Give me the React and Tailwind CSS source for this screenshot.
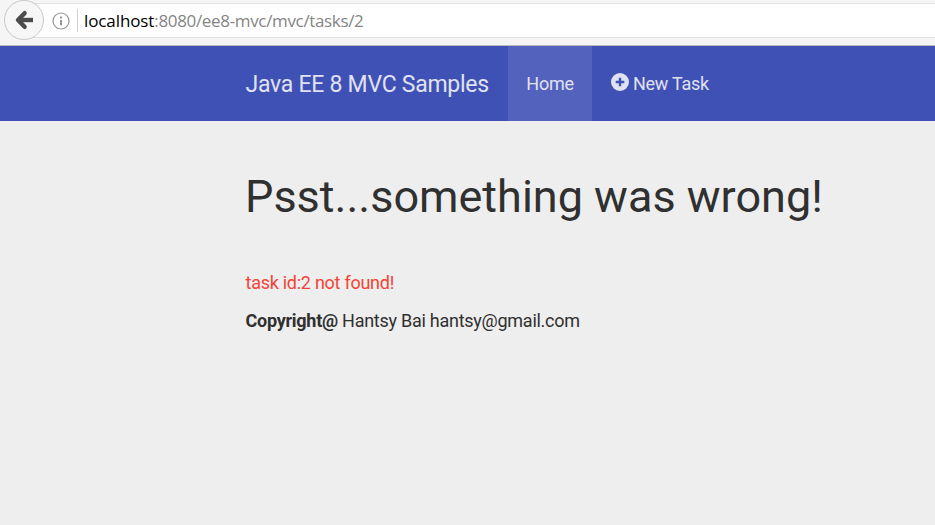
function BackButton() {
  return (
    <button aria-label="Back" className="relative z-10 ml-1 flex size-10 shrink-0 items-center justify-center rounded-full border border-[#c8c8c8] bg-[#f6f6f6]">
      <svg width="20" height="20" viewBox="0 0 20 20" fill="none" stroke="#4c4c4c" strokeWidth="4.4" strokeLinejoin="round">
        <path d="M10.6 3.2 4 10 10.6 16.8" strokeLinecap="round" />
        <path d="M4.5 10H19" />
      </svg>
    </button>
  );
}

function AddressBar() {
  return (
    <header className="flex h-[46px] items-start border-b border-[#b9b9b9] bg-[#f5f5f5]">
      <BackButton />
      <div className="-ml-5 mt-[3px] flex h-[35px] flex-1 items-center border-y border-[#e1e1e1] bg-white pl-7">
        <svg width="18" height="18" viewBox="0 0 18 18" fill="none" stroke="#969696" className="shrink-0">
          <circle cx="9" cy="9" r="8" strokeWidth="1.2" />
          <path d="M9 8v5.2" strokeWidth="2" />
          <path d="M9 4.5v2" strokeWidth="2" />
        </svg>
        <span className="ml-[7px] h-[23px] w-px bg-[#d0d0d0]" />
        <span className="ml-1.5 whitespace-nowrap font-['Open_Sans','Noto_Sans',sans-serif] text-[17px] leading-6 tracking-[-0.34px] text-[#858585]">
          <span className="tracking-[-0.1px] text-black">localhost</span>:8080/ee8-mvc/mvc/tasks/2
        </span>
      </div>
    </header>
  );
}

function PlusCircle() {
  return (
    <svg width="18" height="18" viewBox="0 0 18 18" className="-mt-[3px] mr-1">
      <circle cx="9" cy="9" r="9" fill="#e0e2f2" />
      <path d="M9 4.7v8.6M4.7 9h8.6" stroke="#3f51b5" strokeWidth="2.4" />
    </svg>
  );
}

export default function App() {
  return (
    <div className="h-[525px] w-[935px] overflow-hidden bg-[#eeeeee] font-[Roboto,sans-serif] text-lg tracking-[-0.26px] text-[#303030]">
      <AddressBar />
      <nav className="flex h-[75px] items-stretch bg-[#3f51b5] text-[#e0e2f2]">
        <a className="flex w-[508px] items-center whitespace-nowrap pl-[245.5px] pt-[3px] text-[23px]">Java EE 8 MVC Samples</a>
        <a className="flex w-[84px] items-center justify-center bg-[#5363bd]">Home</a>
        <a className="flex items-center whitespace-nowrap pl-[19px]"><PlusCircle />New Task</a>
      </nav>
      <main className="pl-[245.5px] pt-[46px]">
        <h1 className="-ml-[0.5px] whitespace-nowrap text-[45px] leading-[60px] tracking-normal">Psst...something was wrong!</h1>
        <p className="mt-[43px] leading-[26px] text-[#f44336]">task id:2 not found!</p>
        <p className="mt-3 leading-[26px]"><strong>Copyright@</strong> Hantsy Bai hantsy@gmail.com</p>
      </main>
    </div>
  );
}
